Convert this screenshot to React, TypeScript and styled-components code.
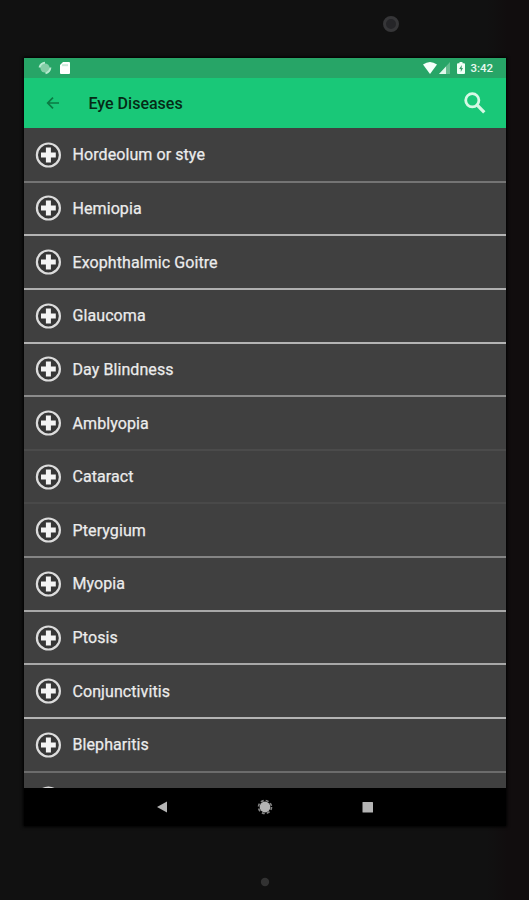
import React from "react";
import styled, { createGlobalStyle } from "styled-components";

const GlobalStyle = createGlobalStyle`
  * { box-sizing: border-box; }
  body { margin: 0; background: #111; font-family: Roboto, "Liberation Sans", sans-serif; }
`;

const Tablet = styled.div`
  width: 529px;
  height: 900px;
  display: flex;
  flex-direction: column;
  align-items: center;
  overflow: hidden;
  background: linear-gradient(90deg, #111 0 92%, #110d0e 96%);
`;

const TopBezel = styled.div`
  width: 100%;
  height: 58px;
  flex: none;
  padding: 15px 0 0 382px;
`;

const Screen = styled.main`
  width: 482px;
  height: 768px;
  flex: none;
  display: flex;
  flex-direction: column;
  overflow: hidden;
  background: #404040;
  box-shadow: 0 0 3px 1px #000;
`;

const BottomBezel = styled.div`
  width: 100%;
  flex: 1;
  display: flex;
  justify-content: center;
  padding-top: 50px;
`;

const StatusBar = styled.div`
  height: 20px;
  flex: none;
  display: flex;
  align-items: center;
  padding: 0 12px 0 14px;
  background: #27a567;
`;

const StatusIcon = styled.svg<{ $gap: number }>`
  display: block;
  flex: none;
  margin-right: ${(p) => p.$gap}px;
`;

const Spacer = styled.span`
  flex: 1;
`;

const Clock = styled.time`
  width: 23px;
  font-size: 11.5px;
  line-height: 20px;
  font-weight: 500;
  color: #e6f8ee;
`;

const AppBar = styled.header`
  height: 50px;
  flex: none;
  display: flex;
  align-items: center;
  padding: 0 19px 0 22px;
  background: #19c878;
`;

const Title = styled.h1`
  flex: 1;
  margin: 2px 0 0 29px;
  font-size: 16px;
  line-height: 20px;
  font-weight: 500;
  color: #052a16;
`;

const BarButton = styled.button`
  display: flex;
  padding: 0;
  border: 0;
  background: none;
`;

const List = styled.ul`
  flex: 1;
  min-height: 0;
  margin: 0;
  padding: 1px 0 0;
  list-style: none;
  overflow: hidden;
`;

const Row = styled.li<{ $line: string }>`
  height: 53.65px;
  display: flex;
  align-items: center;
  gap: 11px;
  padding: 0 11px;
  border-bottom: 2px solid ${(p) => p.$line};
`;

const RowLabel = styled.span`
  padding-top: 1px;
  font-size: 16px;
  line-height: 20px;
  letter-spacing: 0.08px;
  color: #ececec;
  -webkit-text-stroke: 0.25px #ececec;
`;

const NavBar = styled.nav`
  height: 38px;
  flex: none;
  display: flex;
  align-items: center;
  justify-content: center;
  gap: 88px;
  background: #000;
`;

const diseases = [
  { name: "Hordeolum or stye", line: "#747474" },
  { name: "Hemiopia", line: "#b4b4b4" },
  { name: "Exophthalmic Goitre", line: "#b0b0b0" },
  { name: "Glaucoma", line: "#b4b4b4" },
  { name: "Day Blindness", line: "#8c8c8c" },
  { name: "Amblyopia", line: "#4b4b4b" },
  { name: "Cataract", line: "#494949" },
  { name: "Pterygium", line: "#858585" },
  { name: "Myopia", line: "#a8a8a8" },
  { name: "Ptosis", line: "#a8a8a8" },
  { name: "Conjunctivitis", line: "#b4b4b4" },
  { name: "Blepharitis", line: "#6c6c6c" },
];

const PlusBadge = () => (
  <svg width="27" height="26" viewBox="0 0 27 26">
    <circle cx="13.4" cy="13" r="11.5" fill="#363636" stroke="#dcdcdc" strokeWidth="2.2" />
    <path d="M10.9 5.6h5v4.9h4.9v5h-4.9v4.9h-5v-4.9H6v-5h4.9z" fill="#f4f4f4" />
  </svg>
);

export default function App() {
  return (
    <>
      <GlobalStyle />
      <Tablet>
        <TopBezel>
          <svg width="18" height="18" viewBox="0 0 18 18">
            <circle cx="9" cy="9" r="6.5" fill="#252528" stroke="#363638" strokeWidth="3" />
          </svg>
        </TopBezel>
        <Screen>
          <StatusBar>
            <StatusIcon $gap={7} width="14" height="14" viewBox="0 0 14 14">
              <circle cx="7" cy="7" r="4.6" fill="#85cea7" />
              <path d="M1.5 6.5Q3 2 7 1.8M12.4 6.5Q12 10.8 7.5 12.4" fill="none" stroke="#b8ead0" strokeWidth="2" />
            </StatusIcon>
            <StatusIcon $gap={0} width="12" height="14" viewBox="0 0 12 14">
              <path d="M4 1h6q1 0 1 1v10q0 1-1 1H2q-1 0-1-1V4z" fill="#fff" />
              <path d="M4 3.2v2M6 3.2v2M8 3.2v2" stroke="#82c9a3" strokeWidth=".8" />
            </StatusIcon>
            <Spacer />
            <StatusIcon $gap={2} width="14" height="12" viewBox="0 0 14 12">
              <path d="M0 2.5Q7-2.5 14 2.5L7 12z" fill="#f4fff9" />
            </StatusIcon>
            <StatusIcon $gap={7} width="11" height="12" viewBox="0 0 11 12">
              <path d="M11 0v12H0z" fill="#64bd8f" />
              <path d="M7 4.5V12H0z" fill="#e1f7eb" />
            </StatusIcon>
            <StatusIcon $gap={6} width="8" height="12" viewBox="0 0 8 12">
              <path d="M2.5 0h3v1.3H7q1 0 1 1V11q0 1-1 1H1q-1 0-1-1V2.3q0-1 1-1h1.5z" fill="#f0fff6" />
              <path d="M4.8 3L2.2 7h1.6v3L6 6H4.6z" fill="#369d69" />
            </StatusIcon>
            <Clock>3:42</Clock>
          </StatusBar>
          <AppBar>
            <BarButton aria-label="Back">
              <svg width="14" height="14" viewBox="0 0 14 14">
                <path d="M13 7H2M7 1.7L1.7 7L7 12.3" fill="none" stroke="#0b7a43" strokeWidth="1.7" />
              </svg>
            </BarButton>
            <Title>Eye Diseases</Title>
            <BarButton aria-label="Search">
              <svg width="24" height="24" viewBox="0 0 24 24">
                <circle cx="9.3" cy="9.3" r="6.6" fill="none" stroke="#d6f9e5" strokeWidth="2.8" />
                <path d="M14.2 14.2L21.3 21.3" stroke="#d6f9e5" strokeWidth="3.3" />
              </svg>
            </BarButton>
          </AppBar>
          <List>
            {diseases.map((d) => (
              <Row key={d.name} $line={d.line}>
                <PlusBadge />
                <RowLabel>{d.name}</RowLabel>
              </Row>
            ))}
            <Row $line="#6c6c6c">
              <PlusBadge />
            </Row>
          </List>
          <NavBar>
            <svg width="14" height="14" viewBox="0 0 14 14">
              <path d="M2 7l10-5.5v11z" fill="#b4b4b4" />
            </svg>
            <svg width="16" height="16" viewBox="0 0 16 16">
              <circle cx="8" cy="8" r="5.4" fill="#b4b4b4" />
              <circle cx="8" cy="8" r="6.5" fill="none" stroke="#858585" strokeWidth="1.6" strokeDasharray="3 2.1" />
            </svg>
            <svg width="14" height="14" viewBox="0 0 14 14">
              <rect x="1.5" y="2" width="10.5" height="10.5" rx=".5" fill="#b4b4b4" />
            </svg>
          </NavBar>
        </Screen>
        <BottomBezel>
          <svg width="12" height="12" viewBox="0 0 12 12">
            <circle cx="6" cy="6" r="4.2" fill="#323232" />
          </svg>
        </BottomBezel>
      </Tablet>
    </>
  );
}
